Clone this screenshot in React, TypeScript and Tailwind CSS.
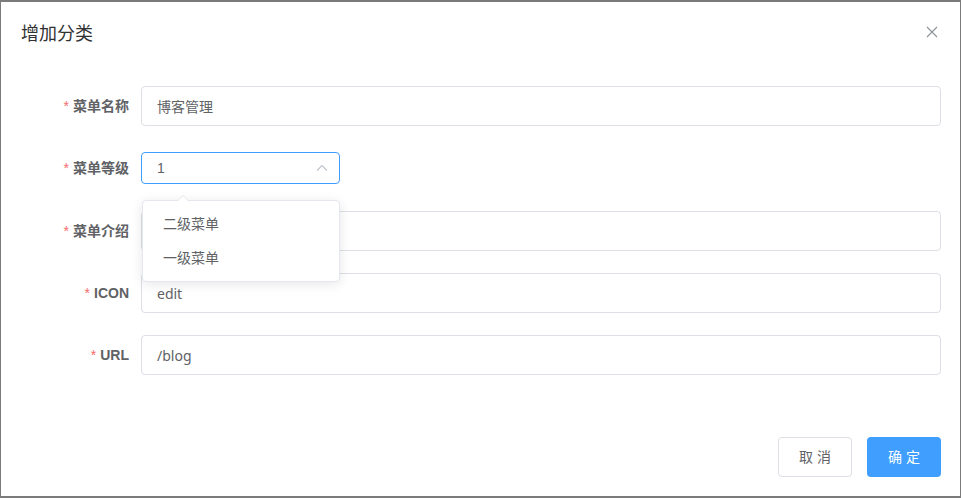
import React from "react";

const font = { fontFamily: '"Liberation Sans", "Noto Sans CJK SC", sans-serif' };

function Label({ text }: { text: string }) {
  return (
    <div className="w-[120px] shrink-0 pr-3 flex items-center justify-end text-[14px] font-bold text-[#606266] h-10">
      <span className="text-[#f56c6c] mr-1 font-normal">*</span>
      {text}
    </div>
  );
}

function Input({ value }: { value: string }) {
  return (
    <div className="flex-1 h-10 border border-[#dcdfe6] rounded-[4px] px-[15px] flex items-center text-[14px] text-[#606266] font-['Noto_Sans','Noto_Sans_CJK_SC',sans-serif]">
      {value}
    </div>
  );
}

export default function App() {
  return (
    <div className="w-[961px] h-[498px] bg-[#7b7b7b] pt-[2px] pl-[1px] overflow-hidden" style={font}>
      <div className="w-[959px] h-[494px] bg-white relative flex flex-col">
        <div className="pt-5 px-5 pb-[10px] flex items-center justify-between h-[54px]">
          <span className="text-[18px] leading-6 text-[#303133]">增加分类</span>
          <svg width="12" height="12" viewBox="0 0 12 12" className="mr-[2px] -mt-[4px]">
            <path d="M1 1L11 11M11 1L1 11" stroke="#909399" strokeWidth="1.2" />
          </svg>
        </div>
        <div className="pt-[30px] pl-5 pr-[19px] flex flex-col gap-[22px]">
          <div className="flex">
            <Label text="菜单名称" />
            <Input value="博客管理" />
          </div>
          <div className="flex relative mb-[1px]">
            <Label text="菜单等级" />
            <div className="h-10 flex items-center">
              <div className="w-[199px] h-8 border border-[#409eff] rounded-[4px] pl-[15px] pr-[10px] flex items-center justify-between text-[14px] text-[#606266]">
                <span>1</span>
                <svg width="14" height="14" viewBox="0 0 14 14">
                  <path d="M2 9.5L7 4.5L12 9.5" fill="none" stroke="#c0c4cc" strokeWidth="1.2" />
                </svg>
              </div>
            </div>
          </div>
          <div className="flex">
            <Label text="菜单介绍" />
            <Input value="" />
          </div>
          <div className="flex">
            <Label text="ICON" />
            <Input value="edit" />
          </div>
          <div className="flex">
            <Label text="URL" />
            <Input value="/blog" />
          </div>
        </div>
        <div className="mt-auto pb-[19px] pr-[19px] flex justify-end gap-[15px]">
          <button className="w-[74px] h-10 border border-[#dcdfe6] rounded-[4px] bg-white text-[14px] text-[#606266] tracking-[4px] pl-[4px]">
            取消
          </button>
          <button className="w-[74px] h-10 rounded-[4px] bg-[#409eff] text-[14px] text-white tracking-[4px] pl-[4px]">
            确定
          </button>
        </div>

        {/* dropdown */}
        <div className="absolute left-[141px] top-[198px] w-[198px] bg-white border border-[#e4e7ed] rounded-[4px] shadow-[0_2px_12px_rgba(0,0,0,0.1)] py-[6px]">
          <div className="absolute -top-[6px] left-[34px] w-0 h-0 border-x-[6px] border-x-transparent border-b-[6px] border-b-[#e4e7ed]" />
          <div className="absolute -top-[5px] left-[35px] w-0 h-0 border-x-[5px] border-x-transparent border-b-[5px] border-b-white" />
          <div className="h-[34px] px-5 flex items-center text-[14px] text-[#606266]">二级菜单</div>
          <div className="h-[34px] px-5 flex items-center text-[14px] text-[#606266]">一级菜单</div>
        </div>
      </div>
    </div>
  );
}
